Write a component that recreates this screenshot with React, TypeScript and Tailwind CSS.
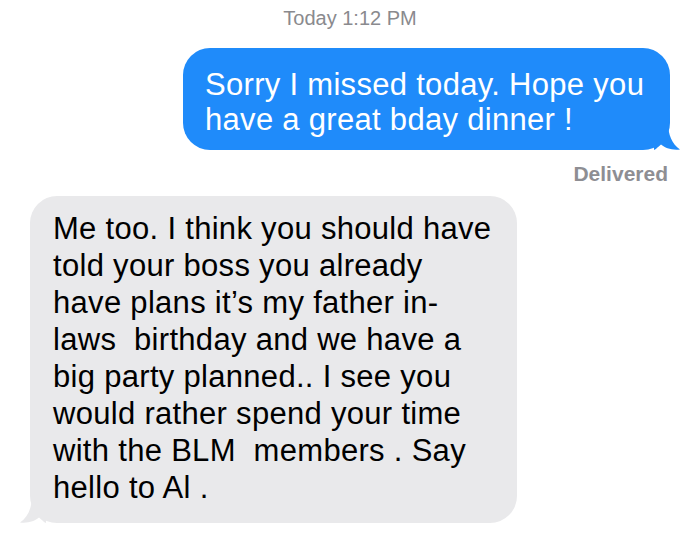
const blueLines = ["Sorry I missed today. Hope you", "have a great bday dinner !"];

const grayLines = [
  "Me too. I think you should have",
  "told your boss you already",
  "have plans it\u2019s my father in-",
  "laws  birthday and we have a",
  "big party planned.. I see you",
  "would rather spend your time",
  "with the BLM  members . Say",
  "hello to Al .",
];

function Tail({ color, flip }: { color: string; flip?: boolean }) {
  return (
    <svg
      width="26"
      height="28"
      viewBox="0 0 26 28"
      className={flip ? "absolute bottom-0 left-[-10px] -scale-x-100" : "absolute bottom-0 right-[-10px]"}
    >
      <path d="M0 0 H14 C14 13 18 22 26 27.5 C18 28.5 11 26 7 22.5 C4 25 1 28 0 28 Z" fill={color} />
    </svg>
  );
}

export default function App() {
  return (
    <div className="h-[548px] w-[700px] overflow-hidden bg-white font-['Liberation_Sans',Arial,sans-serif]">
      <div className="flex flex-col pt-[6px]">
        <div className="text-center text-[20px] leading-[24px] text-[#8a8a8e]">
          Today 1:12 PM
        </div>

        <div className="mt-[18px] flex justify-end pr-[30px]">
          <div className="relative w-[487px] rounded-[27px] bg-[#1f8bfa] pb-[13px] pl-[22px] pt-[19px] text-[31px] leading-[35px] tracking-[0.3px] text-white">
            {blueLines.map((line) => (
              <div key={line} className="whitespace-pre">
                {line}
              </div>
            ))}
            <Tail color="#1f8bfa" />
          </div>
        </div>

        <div className="mt-[12px] pr-[32px] text-right text-[21px] font-semibold leading-[24px] text-[#8e8e93]">
          Delivered
        </div>

        <div className="mt-[10px] flex pl-[30px]">
          <div className="relative w-[487px] rounded-[27px] bg-[#e9e9eb] pb-[17px] pl-[23px] pt-[14px] text-[31px] leading-[37px] tracking-[0.3px] text-black">
            {grayLines.map((line) => (
              <div key={line} className="whitespace-pre">
                {line}
              </div>
            ))}
            <Tail color="#e9e9eb" flip />
          </div>
        </div>
      </div>
    </div>
  );
}
